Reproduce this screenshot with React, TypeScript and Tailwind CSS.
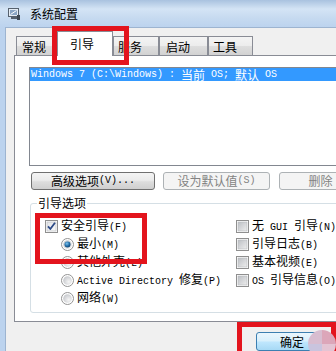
import React from "react";

function T({ s }: { s: string }) {
  const parts = s.split(/([\x20-\x7e]+)/).filter((p) => p.length > 0);
  return (
    <>
      {parts.map((p, i) =>
        /^[\x20-\x7e]+$/.test(p) ? (
          <span key={i} className="whitespace-pre font-['Liberation_Mono',monospace] text-[10px]">
            {p}
          </span>
        ) : (
          <span key={i}>{p}</span>
        )
      )}
    </>
  );
}

function AppIcon() {
  return (
    <svg width="12" height="12" viewBox="0 0 12 12">
      <rect x="0.5" y="0.5" width="10" height="8" fill="#e4ecf4" stroke="#56616e" />
      <rect x="2" y="2" width="7" height="5" fill="#8aa5c4" />
      <path d="M2.5 6.5 L8.5 2.5" stroke="#ffffff" strokeWidth="1" />
      <rect x="3" y="9" width="6" height="2" fill="#56616e" />
      <rect x="9" y="7" width="3" height="5" fill="#3e4853" />
    </svg>
  );
}

function Tab({ label, cls, active }: { label: string; cls: string; active?: boolean }) {
  if (active) {
    return (
      <div
        className={`relative z-10 mb-[-1px] flex h-[25px] items-center border border-b-0 border-[#898c95] bg-white pb-[1px] ${cls}`}
      >
        {label}
      </div>
    );
  }
  return (
    <div
      className={`flex h-[19px] items-center border border-b-0 border-[#898c95] bg-[linear-gradient(180deg,#f4f4f4,#ececec_50%,#dedede_50%,#d2d2d2)] pt-[1px] ${cls}`}
    >
      {label}
    </div>
  );
}

function Check({ checked }: { checked?: boolean }) {
  return (
    <svg width="13" height="13" viewBox="0 0 13 13" className="shrink-0">
      <defs>
        <linearGradient id="cbg" x1="0" y1="0" x2="1" y2="1">
          <stop offset="0" stopColor="#bcbfc4" />
          <stop offset="1" stopColor="#eeeeee" />
        </linearGradient>
        <linearGradient id="cbgc" x1="0" y1="0" x2="1" y2="1">
          <stop offset="0" stopColor="#e2e4e8" />
          <stop offset="1" stopColor="#fafafa" />
        </linearGradient>
      </defs>
      <rect x="0.5" y="0.5" width="12" height="12" fill="#ffffff" stroke="#8f8f8f" />
      <rect x="2" y="2" width="9" height="9" fill={checked ? "url(#cbgc)" : "url(#cbg)"} stroke="#b6b9bd" strokeWidth="0.6" />
      {checked && (
        <path d="M3 6.3 L5.3 9 L10 2.8" fill="none" stroke="#2c4a86" strokeWidth="1.8" strokeLinejoin="round" />
      )}
    </svg>
  );
}

function Radio({ checked }: { checked?: boolean }) {
  return (
    <svg width="13" height="13" viewBox="0 0 13 13" className="shrink-0">
      <defs>
        <radialGradient id="rbg" cx="0.65" cy="0.65" r="0.7">
          <stop offset="0" stopColor="#f6f6f6" />
          <stop offset="1" stopColor="#c6c8cc" />
        </radialGradient>
        <radialGradient id="rdot" cx="0.4" cy="0.35" r="0.7">
          <stop offset="0" stopColor="#7fc3ec" />
          <stop offset="0.6" stopColor="#1f6aa5" />
          <stop offset="1" stopColor="#123e66" />
        </radialGradient>
      </defs>
      <circle cx="6.5" cy="6.5" r="6" fill="#ffffff" stroke="#939393" />
      <circle cx="6.5" cy="6.5" r="4.3" fill="url(#rbg)" />
      {checked && <circle cx="6.5" cy="6.5" r="3" fill="url(#rdot)" />}
    </svg>
  );
}

function CheckRow({ label, checked }: { label: string; checked?: boolean }) {
  return (
    <div className="flex h-[18px] items-center gap-[3px]">
      <Check checked={checked} />
      <span className="whitespace-nowrap">
        <T s={label} />
      </span>
    </div>
  );
}

function RadioRow({ label, checked }: { label: string; checked?: boolean }) {
  return (
    <div className="flex h-[18px] items-center gap-[3px] pl-[16px]">
      <Radio checked={checked} />
      <span className="whitespace-nowrap">
        <T s={label} />
      </span>
    </div>
  );
}

export default function App() {
  return (
    <div className="relative flex h-[351px] w-[336px] flex-col overflow-hidden bg-[#bcd3ee] font-['Noto_Sans_CJK_SC','Noto_Sans',sans-serif] text-[12px] leading-[12px] text-black">
      {/* title bar */}
      <div className="flex h-[27px] shrink-0 items-center gap-[10px] bg-[linear-gradient(180deg,#a9c2df_0px,#d4e4f5_9px,#c6daf0_18px,#bcd3ee_27px)] pl-[8px]">
        <AppIcon />
        <span className="mt-[1px]">系统配置</span>
      </div>

      <div className="flex min-h-0 flex-1">
        <div className="w-[5px] shrink-0" />
        <div className="w-[400px] shrink-0 border-l border-t border-[#9db4d0] bg-[#f0f0f0] pl-[8px] pt-[3px]">
          {/* tabs */}
          <div className="ml-[2px] flex h-[24px] items-end">
            <Tab label="常规" cls="w-[41px] pl-[5px]" />
            <Tab label="引导" cls="w-[56px] pl-[12px]" active />
            <Tab label="服务" cls="w-[46px] pl-[4px]" />
            <Tab label="启动" cls="w-[49px] pl-[6px]" />
            <Tab label="工具" cls="w-[45px] pl-[4px]" />
          </div>

          {/* tab panel */}
          <div className="w-[386px] border border-[#898c95] bg-white pb-[8px] pl-[14px] pt-[11px]">
            <div className="h-[99px] w-[340px] border border-[#828790] bg-white">
              <div className="flex h-[13px] items-center whitespace-nowrap bg-[#3399ff] pl-[1px] text-white">
                <T s="Windows 7 (C:\Windows) : 当前 OS; 默认 OS" />
              </div>
            </div>

            <div className="ml-[2px] mt-[6px] flex gap-[8px]">
              <button className="flex h-[18px] w-[124px] items-center justify-center rounded-[3px] border border-[#707070] bg-[linear-gradient(180deg,#f4f4f4,#ebebeb_45%,#dddddd_55%,#cfcfcf)]">
                <T s="高级选项(V)..." />
              </button>
              <button className="flex h-[18px] w-[107px] items-center justify-center rounded-[3px] border border-[#adb2b5] bg-[#f4f4f4] text-[#838383]">
                <T s="设为默认值(S)" />
              </button>
              <button className="ml-[1px] flex h-[18px] w-[83px] items-center justify-center rounded-[3px] border border-[#adb2b5] bg-[#f4f4f4] text-[#838383]">
                删除
              </button>
            </div>

            {/* group box */}
            <div className="relative ml-[1px] mt-[13px] w-[340px] rounded-[3px] border border-[#d5dfe5] pb-[5px] pl-[14px] pt-[13px]">
              <span className="absolute left-[6px] top-[-7px] bg-white px-[1px]">引导选项</span>
              <div className="flex">
                <div className="w-[191px]">
                  <CheckRow label="安全引导(F)" checked />
                  <RadioRow label="最小(M)" checked />
                  <RadioRow label="其他外壳(L)" />
                  <RadioRow label="Active Directory 修复(P)" />
                  <RadioRow label="网络(W)" />
                </div>
                <div>
                  <CheckRow label="无 GUI 引导(N)" />
                  <CheckRow label="引导日志(B)" />
                  <CheckRow label="基本视频(E)" />
                  <CheckRow label="OS 引导信息(O)" />
                </div>
              </div>
            </div>
          </div>

          {/* dialog buttons */}
          <div className="ml-[242px] mt-[10px] flex gap-[8px]">
            <button className="flex h-[19px] w-[72px] items-center justify-center rounded-[3px] border border-[#3c7fb1] bg-[linear-gradient(180deg,#eaf6fd,#d9f0fc_45%,#bee6fd_55%,#a7d9f5)]">
              确定
            </button>
          </div>
        </div>
      </div>

      {/* annotation overlays */}
      <div className="pointer-events-none absolute left-[52px] top-[26px] h-[39px] w-[77px] border-[5px] border-[#e3141d]" />
      <div className="pointer-events-none absolute left-[35px] top-[213px] h-[51px] w-[112px] border-[5px] border-[#e3141d]" />
      <div className="pointer-events-none absolute left-[237px] top-[322px] h-[40px] w-[99px] border-[5px] border-[#e3141d]" />
      <svg className="pointer-events-none absolute left-[307px] top-[329px]" width="30" height="30" viewBox="0 0 30 30">
        <path d="M15 15 L15 1 A14 14 0 0 0 1 15 Z" fill="#d8bdd0" />
        <path d="M15 15 L29 15 A14 14 0 0 0 15 1 Z" fill="#dca6b9" />
        <path d="M15 15 L1 15 A14 14 0 0 0 15 29 Z" fill="#c9c4de" />
        <path d="M15 15 L15 29 A14 14 0 0 0 29 15 Z" fill="#e4c4d3" />
      </svg>
    </div>
  );
}
